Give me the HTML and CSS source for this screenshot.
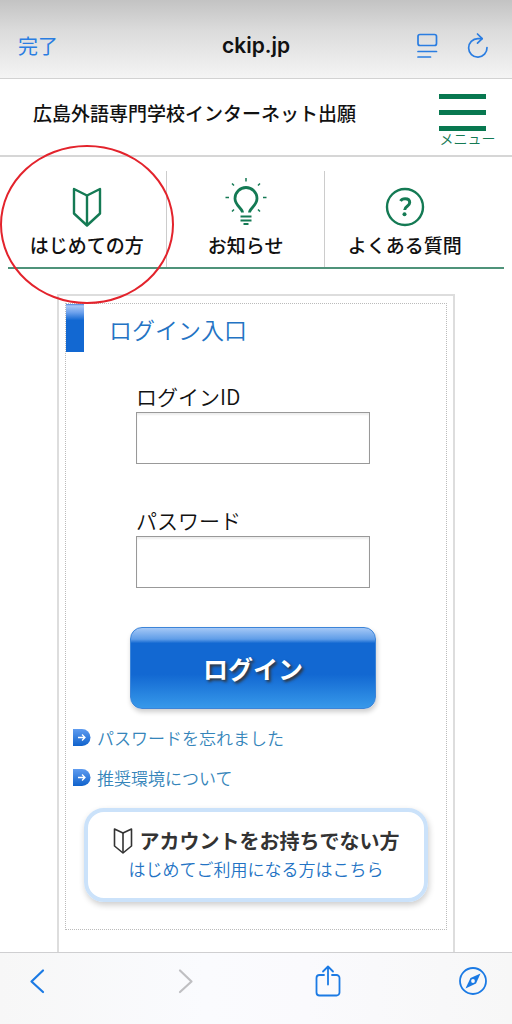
FILE: index.html
```html
<!DOCTYPE html>
<html lang="ja">
<head>
    <meta charset="UTF-8">
    <meta name="viewport" content="width=device-width, initial-scale=1.0">
    <title>広島外語専門学校インターネット出願</title>
    <link rel="stylesheet" href="styles.css">
</head>
<body>
    <div class="browser-bar">
        <button type="button" class="done">完了</button>
        <span class="address">ckip.jp</span>
        <div class="browser-actions">
            <button type="button" class="icon-button" aria-label="リーダー">
                <svg width="24" height="28" viewBox="0 0 24 28" fill="none" stroke="#2a7de1" stroke-width="1.7" stroke-linecap="round">
                    <rect x="3" y="2.500" width="18.500" height="11" rx="2"/>
                    <path d="M3 19.500h18.500M3 25h12.500"/>
                </svg>
            </button>
            <button type="button" class="icon-button" aria-label="再読み込み">
                <svg width="24" height="28" viewBox="0 0 24 28" fill="none" stroke="#2a7de1" stroke-width="1.700" stroke-linecap="round" stroke-linejoin="round">
                    <path d="M21 15.500a9.200 9.200 0 1 1-9.200-8.800h4.200"/>
                    <path d="M11.500 2l4.700 4.700-4.700 4.500"/>
                </svg>
            </button>
        </div>
    </div>

    <header class="site-header">
        <h1>広島外語専門学校インターネット出願</h1>
        <button type="button" class="menu-button">
            <span class="menu-lines"></span>
            <span class="menu-text">メニュー</span>
        </button>
    </header>

    <nav class="main-nav">
        <a href="#" class="nav-item">
            <svg width="40" height="46" viewBox="0 0 40 46" fill="none" stroke="#147a54" stroke-width="2.400" stroke-linejoin="round">
                <path d="M7 6l13 6.500L33 6v24.500L20 42.500 7 30.500z"/>
                <path d="M20 12.500V42"/>
            </svg>
            <span>はじめての方</span>
            <span class="marker"></span>
        </a>
        <a href="#" class="nav-item">
            <svg width="44" height="54" viewBox="0 0 44 54" fill="none" stroke="#147a54" stroke-width="2.800">
                <path d="M18.500 37.500c0-4-7.500-7-7.500-14a11 11 0 0 1 22 0c0 7-7.500 10-7.500 14"/>
                <path d="M16.500 41.500h11M16.500 45.500h11" stroke-width="2"/>
                <path d="M19.500 49h5" stroke-width="2"/>
                <path d="M22 3v3.500M8 8.500l2 2M36 8.500l-2 2M1.500 22.500h3.500M39 22.500h3.500M8 36.500l2-2M36 36.500l-2-2" stroke-width="1.500"/>
            </svg>
            <span>お知らせ</span>
        </a>
        <a href="#" class="nav-item">
            <svg width="44" height="46" viewBox="0 0 44 46" fill="none" stroke="#147a54">
                <circle cx="22" cy="24" r="18" stroke-width="2.400"/>
                <path d="M17.500 18c1-1.600 2.500-2.200 4.600-2.200 2.800 0 4.600 1.500 4.600 3.800 0 3.800-5 3.600-5 7.500" stroke-width="3"/>
                <circle cx="21.500" cy="31.200" r="2" fill="#147a54" stroke="none"/>
            </svg>
            <span>よくある質問</span>
        </a>
    </nav>

    <main class="login-card">
        <form class="login-inner">
            <h2>ログイン入口</h2>
            <div class="form-group">
                <label for="loginId">ログインID</label>
                <input type="text" id="loginId" name="loginId">
            </div>
            <div class="form-group">
                <label for="password">パスワード</label>
                <input type="password" id="password" name="password">
            </div>
            <button type="submit" class="login-button">ログイン</button>
            <ul class="help-links">
                <li>
                    <svg width="18" height="18" viewBox="0 0 18 18">
                        <use href="#arrow"/>
                    </svg>
                    <a href="#">パスワードを忘れました</a>
                </li>
                <li>
                    <svg width="18" height="18" viewBox="0 0 18 18">
                        <use href="#arrow"/>
                    </svg>
                    <a href="#">推奨環境について</a>
                </li>
            </ul>
            <a href="#" class="signup">
                <span class="signup-title">
                    <svg width="20" height="28" viewBox="0 0 20 28" fill="none" stroke="#333" stroke-width="1.600" stroke-linejoin="round">
                        <path d="M1.500 2l8.500 4 8.500-4v17L10 26l-8.500-7z"/>
                        <path d="M10 6v20"/>
                    </svg>
                    アカウントをお持ちでない方
                </span>
                <span class="signup-text">はじめてご利用になる方はこちら</span>
            </a>
        </form>
    </main>

    <footer class="toolbar">
        <button type="button" class="icon-button" aria-label="戻る">
            <svg width="30" height="34" viewBox="0 0 30 34" fill="none" stroke="#1b7ae4" stroke-width="2.200" stroke-linecap="round" stroke-linejoin="round">
                <path d="M19 6.500L7.500 17.500 19 28"/>
            </svg>
        </button>
        <button type="button" class="icon-button" aria-label="進む" disabled>
            <svg width="30" height="34" viewBox="0 0 30 34" fill="none" stroke="#bfbfc2" stroke-width="2.200" stroke-linecap="round" stroke-linejoin="round">
                <path d="M11 6.500l11.500 11L11 28"/>
            </svg>
        </button>
        <button type="button" class="icon-button" aria-label="共有">
            <svg width="30" height="34" viewBox="0 0 30 34" fill="none" stroke="#1b7ae4" stroke-width="1.800" stroke-linecap="round" stroke-linejoin="round">
                <path d="M11 11H6.500a3 3 0 0 0-3 3v14.500a3 3 0 0 0 3 3h17a3 3 0 0 0 3-3V14a3 3 0 0 0-3-3H19"/>
                <path d="M15 20.500V2.500M10 7.500l5-5 5 5"/>
            </svg>
        </button>
        <button type="button" class="icon-button" aria-label="Safariで開く">
            <svg width="30" height="34" viewBox="0 0 30 34">
                <circle cx="15" cy="17" r="13" fill="none" stroke="#1b7ae4" stroke-width="1.800"/>
                <path d="M22.500 9.500L18 19.500 7.500 24.500 12.500 14z" fill="#1b7ae4"/>
                <circle cx="15" cy="17" r="1.900" fill="#fafafa"/>
            </svg>
        </button>
    </footer>

    <svg class="symbols" aria-hidden="true">
        <defs>
            <linearGradient id="arrowFill" x1="0" y1="0" x2="0" y2="1">
                <stop offset="0" stop-color="#5f9cf0"/>
                <stop offset="1" stop-color="#0f62cc"/>
            </linearGradient>
            <symbol id="arrow" viewBox="0 0 18 18">
                <path d="M0 0h9a8.500 8.500 0 0 1 0 17H0z" fill="url(#arrowFill)"/>
                <path d="M5 8.500h7M9 5.500l3 3-3 3" fill="none" stroke="#fff" stroke-width="1.300"/>
            </symbol>
        </defs>
    </svg>
</body>
</html>
```

FILE: styles.css
```css
* {
    box-sizing: border-box;
}
body {
    display: flex;
    flex-direction: column;
    min-height: 100vh;
    margin: 0;
    background: #fff;
    color: #111;
    font-family: "Noto Sans CJK JP", sans-serif;
}
button {
    padding: 0;
    border: none;
    background: none;
    font-family: inherit;
    cursor: pointer;
}
a {
    text-decoration: none;
}
svg {
    display: block;
}

/* ブラウザ上部バー */
.browser-bar {
    display: grid;
    grid-template-columns: 1fr auto 1fr;
    align-items: center;
    height: 79px;
    padding: 14px 18px 0;
    border-bottom: 1px solid #d2d2d2;
    background: linear-gradient(#c3c3c3, #dcdcdc 40%, #f4f4f4);
}
.done {
    justify-self: start;
    color: #2a7de1;
    font-size: 20px;
    line-height: 24px;
}
.address {
    color: #111;
    font-family: Inter, sans-serif;
    font-size: 21px;
    font-weight: 600;
    line-height: 24px;
}
.browser-actions {
    display: flex;
    justify-content: flex-end;
    gap: 27px;
    padding-right: 4px;
}

/* サイトヘッダー */
.site-header {
    display: flex;
    justify-content: space-between;
    align-items: center;
    height: 78px;
    padding: 0 16px 0 33px;
    border-bottom: 2px solid #d6d6d6;
}
.site-header h1 {
    margin: 0;
    padding-bottom: 8px;
    font-size: 19px;
    font-weight: 500;
    line-height: 24px;
}
.menu-button {
    display: flex;
    flex-direction: column;
    width: 57px;
    padding-top: 5px;
    color: #147a54;
}
.menu-lines {
    width: 47px;
    height: 37px;
    border-top: 5px solid #087850;
    border-bottom: 5px solid #087850;
    background: linear-gradient(#087850, #087850) center / 100% 5px no-repeat;
}
.menu-text {
    font-size: 14px;
    font-weight: 350;
    line-height: 14px;
}

/* ナビゲーション */
.main-nav {
    display: grid;
    grid-template-columns: repeat(3, 32%);
    height: 98px;
    margin: 14px 8px 0;
    border-bottom: 2px solid #4f937a;
}
.nav-item {
    position: relative;
    display: flex;
    flex-direction: column;
    align-items: center;
    justify-content: flex-end;
    padding-bottom: 10px;
    border-right: 1px solid #ccc;
    color: #111;
    font-size: 19px;
    font-weight: 500;
    line-height: 24px;
}
.nav-item:last-child {
    border-right: none;
}
.nav-item svg {
    margin-bottom: 4px;
}
.marker {
    position: absolute;
    top: -26px;
    right: -8px;
    bottom: -37px;
    left: -8px;
    z-index: 1;
    border: 2px solid #e3232c;
    border-radius: 50%;
}

/* ログイン */
.login-card {
    display: flex;
    flex: 1;
    flex-direction: column;
    margin: 25px 57px 0;
    padding: 7px 6px 21px;
    border: 2px solid #ddd;
    border-bottom: none;
}
.login-inner {
    display: flex;
    flex-direction: column;
    padding-bottom: 27px;
    border: 1px dotted #bbb;
}
.login-inner h2 {
    margin: 0 0 32px;
    padding: 2px 0 0 25px;
    border-left: 18px solid;
    border-image: linear-gradient(#4c83dc, #a9c8f6 4%, #6ba0ec 18%, #1268d2 34%) 0 0 0 18;
    color: #2373c4;
    font-size: 23px;
    font-weight: 350;
    line-height: 46px;
}
.form-group {
    display: flex;
    flex-direction: column;
    width: 234px;
    margin: 0 auto 39px 70px;
}
.form-group + .form-group {
    margin-top: 5px;
}
.form-group label {
    margin-bottom: 4px;
    font-size: 21px;
    font-weight: 350;
    line-height: 24px;
}
.form-group input {
    width: 100%;
    height: 52px;
    padding: 8px;
    border: 1px solid #999;
    border-radius: 0;
    background: #fff;
    box-shadow: inset 0 2px 2px #eee;
    font-size: 21px;
}
.login-button {
    width: 246px;
    height: 82px;
    margin: 0 auto 0 64px;
    border: 1px solid #3c84d8;
    border-radius: 12px;
    background: linear-gradient(#a5c8f6, #5f9de8 14%, #1268d2 19%, #1268d2 58%, #3799ea);
    box-shadow: 1px 3px 5px rgba(0, 0, 0, 0.2);
    color: #fff;
    font-size: 25px;
    font-weight: bold;
    text-shadow: 2px 2px 3px #333;
}
.help-links {
    margin: 9px 0 10px;
    padding: 0 0 0 7px;
    list-style: none;
}
.help-links li {
    display: flex;
    align-items: center;
    gap: 6px;
    height: 40px;
}
.help-links a {
    color: #3585ba;
    font-size: 17px;
    font-weight: 350;
    line-height: 24px;
}
.signup {
    display: flex;
    flex-direction: column;
    align-items: center;
    height: 94px;
    margin: 0 18px;
    padding-top: 15px;
    border: 4px solid #cbe2fa;
    border-radius: 20px;
    box-shadow: 1px 3px 6px rgba(0, 0, 0, 0.2);
}
.signup-title {
    display: flex;
    align-items: center;
    gap: 7px;
    color: #333;
    font-size: 20px;
    font-weight: bold;
    line-height: 28px;
}
.signup-text {
    color: #2373c4;
    font-size: 17px;
    font-weight: 350;
    line-height: 28px;
}

/* ブラウザ下部ツールバー */
.toolbar {
    display: flex;
    justify-content: space-between;
    align-items: flex-start;
    height: 72px;
    padding: 11px 24px 0;
    border-top: 1px solid #cfcfd1;
    background: linear-gradient(90deg, #f7f7f7, #fafbfe 40%, #fafafd 60%, #f7f7f7);
}
.symbols {
    position: absolute;
    width: 0;
    height: 0;
}
```
